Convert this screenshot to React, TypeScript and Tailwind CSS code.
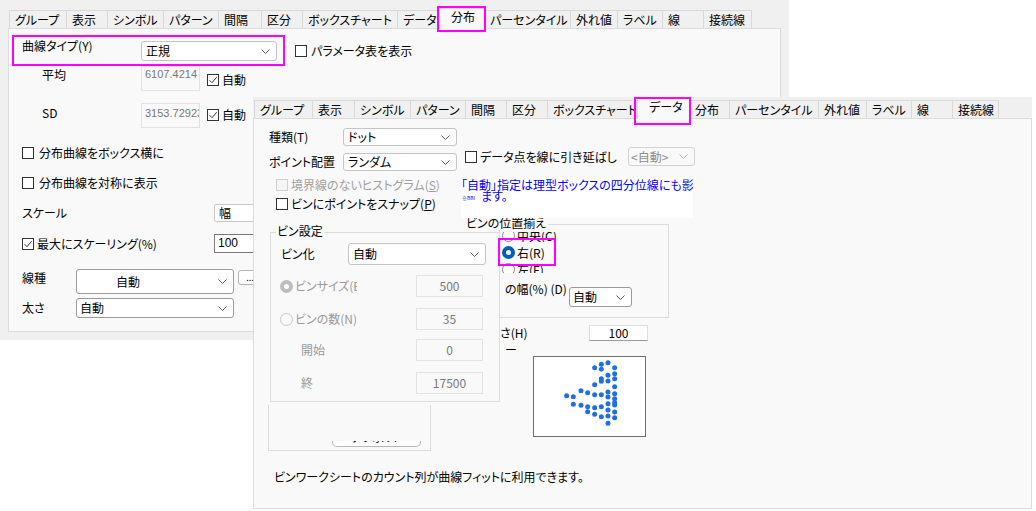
import React from 'react'

const JP = "font-['Noto_Sans_CJK_JP','Noto_Sans_CJK_SC',sans-serif] [font-feature-settings:'palt']"
const NUM = "font-['Liberation_Sans',Arial,sans-serif]"

const backTabs: [string, string][] = [
  ['グループ', 'w-[58px]'], ['表示', 'w-[41px]'], ['シンボル', 'w-[56px]'], ['パターン', 'w-[55px]'],
  ['間隔', 'w-[43px]'], ['区分', 'w-[41px]'], ['ボックスチャート', 'w-[95px]'], ['データ', 'w-[41px]'],
  ['分布', 'w-[46px]'], ['パーセンタイル', 'w-[86px]'], ['外れ値', 'w-[47px]'], ['ラベル', 'w-[45px]'],
  ['線', 'w-[41px]'], ['接続線', 'w-[48px]'],
]

const frontTabs: [string, string][] = [
  ['グループ', 'w-[59px]'], ['表示', 'w-[42px]'], ['シンボル', 'w-[56px]'], ['パターン', 'w-[55px]'],
  ['間隔', 'w-[41px]'], ['区分', 'w-[41px]'], ['ボックスチャート', 'w-[89px]'], ['データ', 'w-[53px]'],
  ['分布', 'w-[40px]'], ['パーセンタイル', 'w-[89px]'], ['外れ値', 'w-[48px]'], ['ラベル', 'w-[45px]'],
  ['線', 'w-[41px]'], ['接続線', 'w-[46px]'],
]

// dot plot, coordinates read off a 3x crop
const dots: [number, number][] = [
  [193, 55], [213, 45], [213, 60], [233, 40], [253, 55],
  [253, 73], [233, 78], [213, 88], [213, 96], [233, 95], [253, 88],
  [193, 106], [253, 112],
  [152, 124], [172, 130], [193, 136], [213, 136], [233, 128], [233, 143], [253, 133], [253, 148],
  [109, 139], [129, 142],
  [129, 165], [152, 168], [172, 172], [193, 175], [213, 172], [233, 163], [253, 160], [253, 167],
  [172, 187], [193, 195], [213, 202], [233, 182], [233, 200], [253, 188], [253, 205],
  [233, 222],
]

function Chev({ dim }: { dim?: boolean }) {
  return (
    <svg width="9" height="5" viewBox="0 0 9 5" className="mr-[6px] shrink-0">
      <path d="M0.5 0.5 L4.5 4.5 L8.5 0.5" fill="none" stroke={dim ? '#b4b4b4' : '#5f5f5f'} strokeWidth="1" />
    </svg>
  )
}

function Drop({ text, cls, textCls = 'pl-[4px]', dim }: { text: string; cls: string; textCls?: string; dim?: boolean }) {
  return (
    <div className={`flex shrink-0 items-center rounded-[3px] border ${dim ? 'bg-[#f9f9f9]' : 'bg-white'} ${cls}`}>
      <span className={`flex-1 whitespace-nowrap ${textCls} ${dim ? 'text-[#8c8c8c]' : ''}`}>{text}</span>
      <Chev dim={dim} />
    </div>
  )
}

function Box({ on, off }: { on?: boolean; off?: boolean }) {
  return (
    <span className={`flex h-[12px] w-[12px] shrink-0 items-center justify-center border ${off ? 'border-[#d0d0d0] bg-[#f5f5f5]' : 'border-[#333333] bg-white'}`}>
      {on && (
        <svg width="10" height="10" viewBox="0 0 10 10">
          <path d="M1.5 5.2 L4 7.7 L8.7 2.2" fill="none" stroke="#333333" strokeWidth="1" />
        </svg>
      )}
    </span>
  )
}

function Radio({ kind }: { kind: 'on' | 'off' | 'dimOn' | 'dimOff' }) {
  const cls = {
    on: 'border-[4px] border-[#005fb8] bg-white',
    off: 'border border-[#8a8a8a] bg-white',
    dimOn: 'border-[4px] border-[#bdbdbd] bg-white',
    dimOff: 'border border-[#c8c8c8] bg-[#f9f9f9]',
  }[kind]
  return <span className={`block h-[13px] w-[13px] shrink-0 rounded-full ${cls}`} />
}

function Tab({ label, w, sel, mark }: { label: string; w: string; sel?: boolean; mark: string }) {
  if (sel) {
    return (
      <div className={`relative z-10 -mb-px flex h-[21px] shrink-0 items-start whitespace-nowrap border-x border-t border-[#d9d9d9] bg-[#f9f9f9] pl-[11px] pt-[1px] ${w}`}>
        {label}
        <div className={`absolute border-2 border-[#ff00ff] ${mark}`} />
      </div>
    )
  }
  return (
    <div className={`flex h-[18px] shrink-0 items-center overflow-hidden whitespace-nowrap border-r border-t border-[#d9d9d9] bg-[#f0f0f0] pl-[5px] first:border-l ${w}`}>
      {label}
    </div>
  )
}

function NumBox({ v, cls }: { v: string; cls: string }) {
  return (
    <div className={`flex shrink-0 items-center justify-center border border-[#e2e2e2] bg-[#f9f9f9] text-[#7a7a7a] ${cls}`}>{v}</div>
  )
}

function BackDialog() {
  return (
    <div className="absolute left-0 top-0 h-[340px] w-[789px] bg-[#f0f0f0]">
      <div className="flex h-[28px] items-end pl-[9px]">
        {backTabs.map(([t, w], i) => (
          <Tab key={i} label={t} w={w} sel={i === 8} mark="left-[-3px] top-[-3px] h-[26px] w-[49px]" />
        ))}
      </div>
      <div className="ml-[8px] flex h-[304px] w-[773px] flex-col border border-[#dcdcdc] bg-[#f9f9f9]">
        <div className="mt-[6px] flex h-[31px] items-center">
          <div className="ml-[3px] flex h-[31px] w-[273px] items-start border-2 border-[#ff00ff] pl-[8px] pt-[2px]">
            <span className="w-[119px]">曲線タイプ(Y)</span>
            <Drop text="正規" cls="mt-[2px] h-[20px] w-[136px] border-[#c4c4c4]" />
          </div>
          <div className="ml-[10px] flex items-center gap-[4px]">
            <Box />
            <span>パラメータ表を表示</span>
          </div>
        </div>

        <div className="flex h-[25px] items-start pl-[33px]">
          <span className="mt-[2px] w-[99px]">平均</span>
          <div className={`h-[25px] w-[59px] overflow-hidden whitespace-nowrap border border-[#e2e2e2] pl-[3px] text-[11px] text-[#7a7a7a] ${NUM}`}>6107.4214</div>
          <div className="ml-[7px] mt-[7px] flex h-[14px] items-center gap-[3px]">
            <Box on />
            <span>自動</span>
          </div>
        </div>

        <div className="mt-[12px] flex h-[25px] items-start pl-[33px]">
          <span className="mt-[3px] w-[99px]">SD</span>
          <div className={`h-[25px] w-[59px] overflow-hidden whitespace-nowrap border border-[#e2e2e2] pl-[3px] pt-[2px] text-[11px] text-[#7a7a7a] ${NUM}`}>3153.72923</div>
          <div className="ml-[7px] mt-[5px] flex h-[14px] items-center gap-[3px]">
            <Box on />
            <span>自動</span>
          </div>
        </div>

        <div className="mt-[17px] flex h-[16px] items-center gap-[5px] pl-[13px]">
          <Box />
          <span>分布曲線をボックス横に</span>
        </div>
        <div className="mt-[14px] flex h-[16px] items-center gap-[5px] pl-[13px]">
          <Box />
          <span>分布曲線を対称に表示</span>
        </div>

        <div className="mt-[13px] flex h-[18px] items-center pl-[13px]">
          <span className="w-[192px]">スケール</span>
          <div className="h-[18px] w-[50px] rounded-[2px] border border-[#c8c8c8] bg-white pl-[4px] leading-[16px]">幅</div>
        </div>

        <div className="mt-[12px] flex h-[19px] items-center pl-[13px]">
          <div className="flex w-[192px] items-center gap-[3px]">
            <Box on />
            <span>最大にスケーリング(%)</span>
          </div>
          <div className={`h-[19px] w-[50px] border border-[#7a7a7a] bg-white pl-[3px] text-[12px] leading-[17px] ${NUM}`}>100</div>
        </div>

        <div className="mt-[16px] flex h-[25px] items-start pl-[13px]">
          <span className="mt-[2px] w-[54px]">線種</span>
          <Drop text="自動" cls="h-[25px] w-[158px] border-[#9a9a9a]" textCls="pl-[39px]" />
          <div className="ml-[4px] mt-[1px] flex h-[15px] w-[24px] items-center justify-center rounded-[3px] border border-[#b4b4b4] bg-white text-[9px] leading-none">...</div>
        </div>

        <div className="mt-[4px] flex h-[20px] items-center pl-[13px]">
          <span className="w-[54px]">太さ</span>
          <Drop text="自動" cls="h-[20px] w-[158px] border-[#9a9a9a]" textCls="pl-[3px]" />
        </div>
      </div>
    </div>
  )
}

function FrontDialog() {
  return (
    <div className="absolute left-[253px] top-[97px] h-[412px] w-[779px] bg-[#f0f0f0]">
      <div className="flex h-[21px] items-end pl-[1px]">
        {frontTabs.map(([t, w], i) => (
          <Tab key={i} label={t} w={w} sel={i === 7} mark="left-[-4px] top-[-2px] h-[28px] w-[57px]" />
        ))}
      </div>
      <div className="flex h-[391px] w-[779px] flex-col border border-[#dcdcdc] bg-[#f9f9f9]">
        <div className="flex">
          {/* left column */}
          <div className="flex w-[207px] shrink-0 flex-col">
            <div className="mt-[9px] flex h-[18px] items-center pl-[15px]">
              <span className="w-[74px]">種類(T)</span>
              <Drop text="ドット" cls="h-[18px] w-[114px] border-[#c4c4c4]" />
            </div>
            <div className="mt-[7px] flex h-[18px] items-center pl-[15px]">
              <span className="w-[74px]">ポイント配置</span>
              <Drop text="ランダム" cls="h-[18px] w-[114px] border-[#c4c4c4]" />
            </div>
            <div className="mt-[6px] flex h-[16px] items-center gap-[3px] whitespace-nowrap pl-[22px] text-[#a0a0a0]">
              <Box off />
              <span>境界線のないヒストグラム(<u>S</u>)</span>
            </div>
            <div className="mt-[3px] flex h-[16px] items-center gap-[3px] whitespace-nowrap pl-[22px]">
              <Box />
              <span>ビンにポイントをスナップ(<u>P</u>)</span>
            </div>

            <div className="relative ml-[16px] mt-[20px] flex h-[170px] w-[230px] shrink-0 flex-col border border-[#dcdcdc]">
              <span className="absolute left-[5px] top-[-9px] bg-[#f9f9f9] px-[1px]">ビン設定</span>
              <div className="mt-[10px] flex h-[22px] items-center pl-[10px]">
                <span className="w-[67px]">ビン化</span>
                <Drop text="自動" cls="h-[22px] w-[138px] border-[#c4c4c4]" />
              </div>
              <div className="mt-[10px] flex h-[22px] items-center pl-[9px]">
                <div className="flex w-[136px] items-center gap-[2px] text-[#9a9a9a]">
                  <Radio kind="dimOn" />
                  <span className="w-[62px] overflow-hidden whitespace-nowrap">ビンサイズ(E)</span>
                </div>
                <NumBox v="500" cls="h-[22px] w-[67px]" />
              </div>
              <div className="mt-[11px] flex h-[22px] items-center pl-[9px]">
                <div className="flex w-[136px] items-center gap-[2px] text-[#9a9a9a]">
                  <Radio kind="dimOff" />
                  <span className="whitespace-nowrap">ビンの数(N)</span>
                </div>
                <NumBox v="35" cls="h-[22px] w-[67px]" />
              </div>
              <div className="mt-[9px] flex h-[22px] items-center pl-[30px]">
                <span className="w-[115px] text-[#9a9a9a]">開始</span>
                <NumBox v="0" cls="h-[22px] w-[67px]" />
              </div>
              <div className="mt-[11px] flex h-[22px] items-center pl-[30px]">
                <span className="w-[115px] text-[#9a9a9a]">終</span>
                <NumBox v="17500" cls="h-[22px] w-[67px]" />
              </div>
            </div>

            <div className="ml-[14px] mt-[3px] flex h-[46px] w-[163px] shrink-0 flex-col justify-end border-x border-b border-[#dcdcdc]">
              <div className="mb-[3px] ml-[63px] h-[6px] w-[89px] overflow-hidden rounded-b-[5px] border-x border-b border-[#b8b8b8] bg-white">
                <div className="-mt-[11px] text-center text-[12px] leading-[14px]">デフォルト</div>
              </div>
            </div>
          </div>

          {/* right column */}
          <div className="flex flex-col">
            <div className="mt-[28px] flex h-[19px] w-[234px] items-center">
              <div className="flex items-center gap-[3px] whitespace-nowrap pl-[4px]">
                <Box />
                <span>データ点を線に引き延ばし</span>
              </div>
              <Drop text="<自動>" dim cls="ml-auto h-[19px] w-[67px] border-[#d2d2d2]" textCls="pl-[2px]" />
            </div>

            <div className="relative z-10 mt-[11px] h-[41px] w-[232px] overflow-hidden whitespace-nowrap bg-white pt-[2px] leading-[11px] text-[#0000ff]">
              <div>「自動」指定は理型ボックスの四分位線にも影</div>
              <div className="flex items-end">
                <span className="w-[20px] pl-[1px] text-[5px] leading-[6px]">※BBI</span>
                <span>ます。</span>
              </div>
            </div>

            <div className="relative ml-[38px] mt-[6px] flex h-[94px] w-[170px] shrink-0 flex-col border border-[#dcdcdc]">
              <span className="absolute left-[-34px] top-[-9px] whitespace-nowrap bg-[#f9f9f9] pr-[2px]">ビンの位置揃え</span>
              <div className="mt-[7px] h-[10px] overflow-hidden pl-[2px]">
                <div className="-mt-[3px] flex h-[13px] items-center gap-[2px]">
                  <Radio kind="off" />
                  <span>中央(C)</span>
                </div>
              </div>
              <div className="relative mt-[4px] flex h-[13px] items-center gap-[2px] pl-[2px]">
                <Radio kind="on" />
                <span>右(R)</span>
                <div className="absolute left-[-2px] top-[-8px] h-[28px] w-[58px] border-2 border-[#ff00ff]" />
              </div>
              <div className="mt-[4px] h-[10px] overflow-hidden pl-[2px]">
                <div className="flex h-[13px] items-center gap-[2px]">
                  <Radio kind="off" />
                  <span>左(F)</span>
                </div>
              </div>
              <div className="mt-[14px] flex h-[20px] items-start">
                <span className="-mt-[5px] ml-[5px] w-[64px] whitespace-nowrap">の幅(%) (D)</span>
                <Drop text="自動" cls="h-[20px] w-[63px] border-[#9a9a9a]" textCls="pl-[3px]" />
              </div>
            </div>

            <div className="mt-[7px] flex h-[16px] items-center">
              <span className="ml-[39px] w-[89px]">さ(H)</span>
              <div className="flex h-[16px] w-[59px] items-center justify-center border border-[#dedede] border-b-[#9a9a9a] bg-white">100</div>
            </div>
            <div className="ml-[44px] mt-[3px] h-[12px] leading-[12px]">ー</div>
            <div className="ml-[72px] h-[81px] w-[113px] border border-[#6e6e6e] bg-white">
              <svg width="111" height="79" viewBox="0 0 111 79">
                <g transform="scale(0.3333) translate(-11,-23)">
                  {dots.map(([x, y], i) => (
                    <circle key={i} cx={x} cy={y} r="7.5" fill="#1f6fe0" />
                  ))}
                </g>
              </svg>
            </div>
          </div>
        </div>

        <div className="mt-[19px] pl-[20px]">ビンワークシートのカウント列が曲線フィットに利用できます。</div>
      </div>
    </div>
  )
}

export default function App() {
  return (
    <div className={`relative h-[511px] w-[1036px] overflow-hidden bg-white text-[12px] leading-[14px] text-black ${JP}`}>
      <BackDialog />
      <FrontDialog />
    </div>
  )
}
